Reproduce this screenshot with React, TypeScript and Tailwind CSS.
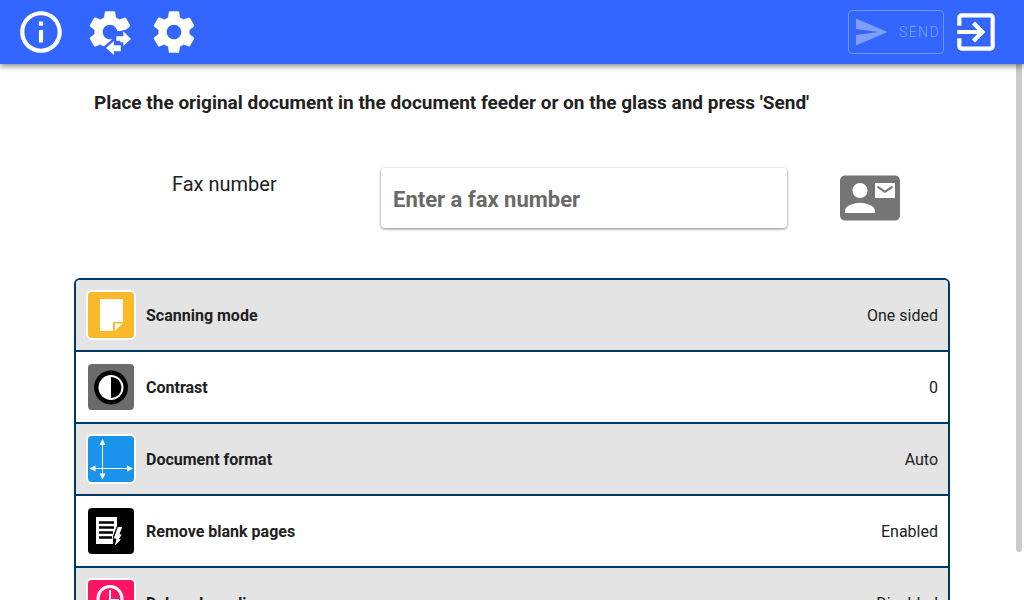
import * as React from "react";

type Setting = {
  id: string;
  label: string;
  value: string;
  icon: React.ReactNode;
};

const settings: Setting[] = [
  { id: "mode", label: "Scanning mode", value: "One sided", icon: <ScanModeIcon /> },
  { id: "contrast", label: "Contrast", value: "0", icon: <ContrastIcon /> },
  { id: "format", label: "Document format", value: "Auto", icon: <FormatIcon /> },
  { id: "blank", label: "Remove blank pages", value: "Enabled", icon: <BlankPagesIcon /> },
  { id: "delay", label: "Delayed sending", value: "Disabled", icon: <DelayIcon /> },
];

export default function App() {
  const [fax, setFax] = React.useState("");

  return (
    <div className="relative flex h-screen flex-col overflow-hidden bg-white font-[Roboto,sans-serif] text-[#212121]">
      <header className="z-10 flex h-16 shrink-0 items-center justify-between bg-[#3366ff] pl-4 pr-[23px] text-white shadow-[0_2px_6px_rgba(0,0,0,0.5)]">
        <div className="flex items-center gap-[14px]">
          <button type="button" aria-label="Information" className="mr-[5px]">
            <InfoIcon />
          </button>
          <button type="button" aria-label="Transfer settings">
            <GearTransferIcon />
          </button>
          <button type="button" aria-label="Settings">
            <GearIcon />
          </button>
        </div>
        <div className="flex items-center gap-[7px]">
          <button
            type="button"
            disabled
            className="flex h-11 w-24 items-center gap-[10px] rounded border border-[#6f94ff] pl-1 text-sm font-light tracking-widest text-[#7f9fff]"
          >
            <SendIcon />
            SEND
          </button>
          <button type="button" aria-label="Exit">
            <ExitIcon />
          </button>
        </div>
      </header>

      <main className="min-h-0 flex-1 overflow-hidden px-[74px]">
        <h1 className="px-5 pt-6 text-[19px] font-bold leading-[30px]">
          Place the original document in the document feeder or on the glass and press 'Send'
        </h1>

        <div className="mt-[50px] flex items-start pr-[50px]">
          <label htmlFor="fax" className="w-[307px] shrink-0 pl-[98px] text-xl leading-8">
            Fax number
          </label>
          <input
            id="fax"
            type="tel"
            value={fax}
            onChange={(e) => setFax(e.target.value)}
            placeholder="Enter a fax number"
            className="h-[60px] min-w-0 flex-1 rounded bg-white px-3 pt-[2px] text-[22px] font-bold shadow-[0_1px_3px_rgba(0,0,0,0.5)] outline-none placeholder:text-[#696969]"
          />
          <button type="button" aria-label="Address book" className="ml-[53px] text-[#757575]">
            <ContactMailIcon />
          </button>
        </div>

        <ul className="mt-[50px] divide-y-2 divide-[#003a63] rounded-md border-2 border-[#003a63]">
          {settings.map((s) => (
            <li key={s.id} className="odd:bg-[#e4e4e4] first:rounded-t">
              <button
                type="button"
                className="flex h-[70px] w-full items-center gap-[10px] px-[10px] leading-[25px]"
              >
                <span className="rounded-md border-2 border-white">{s.icon}</span>
                <span className="font-bold">{s.label}</span>
                <span className="ml-auto">{s.value}</span>
              </button>
            </li>
          ))}
        </ul>
      </main>

      {/* Scroll thumb */}
      <div className="absolute right-[2px] top-16 h-[488px] w-[6px] rounded-b-full bg-[#cacaca]" />
    </div>
  );
}

function Glyph({ d, className = "size-[50px]" }: { d: string; className?: string }) {
  return (
    <svg viewBox="0 0 24 24" className={className} fill="currentColor" aria-hidden="true">
      <path d={d} />
    </svg>
  );
}

const gearPath =
  "M19.43 12.98c.04-.32.07-.64.07-.98s-.03-.66-.07-.98l2.11-1.65c.19-.15.24-.42.12-.64l-2-3.46c-.12-.22-.39-.3-.61-.22l-2.49 1c-.52-.4-1.08-.73-1.69-.98l-.38-2.65C14.46 2.18 14.25 2 14 2h-4c-.25 0-.46.18-.49.42l-.38 2.65c-.61.25-1.17.59-1.69.98l-2.49-1c-.23-.09-.49 0-.61.22l-2 3.46c-.13.22-.07.49.12.64l2.11 1.65c-.04.32-.07.65-.07.98s.03.66.07.98l-2.11 1.65c-.19.15-.24.42-.12.64l2 3.46c.12.22.39.3.61.22l2.49-1c.52.4 1.08.73 1.69.98l.38 2.65c.03.24.24.42.49.42h4c.25 0 .46-.18.49-.42l.38-2.65c.61-.25 1.17-.59 1.69-.98l2.49 1c.23.09.49 0 .61-.22l2-3.46c.12-.22.07-.49-.12-.64l-2.11-1.65zM12 15.5c-1.93 0-3.5-1.57-3.5-3.5s1.57-3.5 3.5-3.5 3.5 1.57 3.5 3.5-1.57 3.5-3.5 3.5z";

function InfoIcon() {
  return (
    <Glyph d="M11 7h2v2h-2zm0 4h2v6h-2zm1-9C6.48 2 2 6.48 2 12s4.48 10 10 10 10-4.48 10-10S17.52 2 12 2zm0 18c-4.41 0-8-3.59-8-8s3.59-8 8-8 8 3.59 8 8-3.59 8-8 8z" />
  );
}

function GearIcon() {
  return <Glyph d={gearPath} />;
}

function GearTransferIcon() {
  return (
    <svg viewBox="0 0 50 50" className="size-[50px]" aria-hidden="true">
      <g transform="scale(2.0833)">
        <path fill="#fff" d={gearPath} />
      </g>
      {/* cut-out behind the two arrows */}
      <path fill="#3366ff" d="M50 23H38.500L36 24H30l-3 8.500L17 41v9h33z" />
      <path fill="#fff" d="M31.300 29.300h7v-5L46 32l-7.700 7v-3.700h-3v-1.500h-4z" />
      <path fill="#fff" d="M21 41l8-7v4.200h6.800v6H29V48z" />
    </svg>
  );
}

function SendIcon() {
  return <Glyph className="size-[36px]" d="M2.01 21L23 12 2.01 3 2 10l15 2-15 2z" />;
}

function ExitIcon() {
  return (
    <Glyph d="M10.09 15.59L11.5 17l5-5-5-5-1.41 1.41L12.67 11H3v2h9.67l-2.58 2.59zM19 3H5c-1.11 0-2 .9-2 2v4h2V5h14v14H5v-4H3v4c0 1.1.89 2 2 2h14c1.1 0 2-.9 2-2V5c0-1.1-.9-2-2-2z" />
  );
}

function ContactMailIcon() {
  return (
    <Glyph
      className="size-[60px]"
      d="M21 8V7l-3 2-3-2v1l3 2 3-2zm1-5H2C.9 3 0 3.9 0 5v14c0 1.1.9 2 2 2h20c1.1 0 1.99-.9 1.99-2L24 5c0-1.1-.9-2-2-2zM8 6c1.66 0 3 1.34 3 3s-1.34 3-3 3-3-1.34-3-3 1.34-3 3-3zm6 12H2v-1c0-2 4-3.1 6-3.1s6 1.1 6 3.1v1zm8-6h-8V6h8v6z"
    />
  );
}

function Tile({ className, children }: { className: string; children: React.ReactNode }) {
  return (
    <svg viewBox="0 0 46 46" className={`size-[46px] rounded ${className}`} aria-hidden="true">
      {children}
    </svg>
  );
}

function ScanModeIcon() {
  return (
    <Tile className="bg-[#fbb829]">
      <path fill="#fff" d="M12 7h23v23H25v9H12z" />
      <path fill="#fff" d="M27 31.500h7.500L27 39z" />
    </Tile>
  );
}

function ContrastIcon() {
  return (
    <Tile className="bg-[#6b6b6b]">
      <circle cx="23" cy="23.500" r="17" fill="#000" />
      <circle cx="23" cy="23.500" r="12.500" fill="#fff" />
      <path d="M23 13a10.500 10.500 0 0 1 0 21z" fill="#000" />
    </Tile>
  );
}

function FormatIcon() {
  return (
    <Tile className="bg-[#1a94ea]">
      <path d="M14.500 6v35M4 32.500h38" stroke="#fff" strokeWidth="1" />
      <path
        fill="#fff"
        d="M14.500 3l3 6h-6zM14.500 43.500l3-6h-6zM1.500 32.500l6-3v6zM45 32.500l-6-3v6z"
      />
    </Tile>
  );
}

function BlankPagesIcon() {
  return (
    <Tile className="bg-black">
      <path fill="#fff" d="M8 9h21v9l-4 10v8H8z" />
      <path d="M11 14.500h15M11 19.500h15M11 24.500h14M11 29.500h13" stroke="#000" strokeWidth="2.500" />
      <path fill="#fff" stroke="#000" strokeWidth="1" d="M29.500 18.500H35L32 26h2.500l-3 5h2.500l-8 8 2-8h-3z" />
    </Tile>
  );
}

function DelayIcon() {
  return (
    <Tile className="bg-[#ff1464]">
      <circle cx="22" cy="18.500" r="12" fill="none" stroke="#fff" strokeWidth="3" />
      <path d="M22 10v10h9" fill="none" stroke="#fff" strokeWidth="2" />
    </Tile>
  );
}
